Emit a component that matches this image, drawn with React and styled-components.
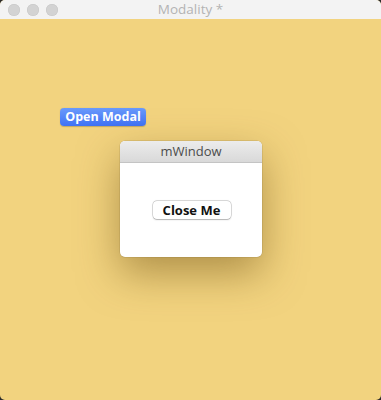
import React from 'react';
import styled, { createGlobalStyle } from 'styled-components';

const GlobalStyle = createGlobalStyle`
  html, body {
    margin: 0;
    padding: 0;
    background: #2b2b2b;
  }
  body {
    font-family: "Liberation Sans", Arial, sans-serif;
  }
`;

const Window = styled.div`
  width: 381px;
  height: 400px;
  border-radius: 5px;
  overflow: hidden;
  display: flex;
  flex-direction: column;
  background: #f2d37f;
`;

const TitleBar = styled.div`
  height: 19px;
  flex: none;
  background: #f3f3f3;
  display: flex;
  align-items: center;
  position: relative;
  padding-left: 8px;
  gap: 7px;
`;

const Light = styled.span`
  width: 12px;
  height: 12px;
  border-radius: 50%;
  background: #d3d3d3;
  box-shadow: inset 0 0 0 0.5px #c6c6c6;
`;

const Title = styled.div`
  position: absolute;
  left: 0;
  right: 0;
  top: 0;
  height: 19px;
  line-height: 19px;
  text-align: center;
  font-size: 13.5px;
  color: #b3b3b3;
  font-family: "Open Sans", "Liberation Sans", sans-serif;
`;

const Content = styled.div`
  flex: 1;
  padding: 89px 0 0 60px;
  display: flex;
  flex-direction: column;
  align-items: flex-start;
`;

const BlueButton = styled.button`
  height: 18px;
  width: 86px;
  padding: 0;
  border: none;
  border-radius: 4px;
  background: linear-gradient(#6a9afb, #3f72f5);
  color: #fff;
  font-family: "Open Sans", "Liberation Sans", sans-serif;
  font-weight: 700;
  font-size: 12.5px;
  line-height: 18px;
  box-shadow: 0 0.5px 1px rgba(0, 0, 0, 0.2);
`;

const Modal = styled.div`
  margin: 15px 0 0 60px;
  width: 142px;
  height: 116px;
  border-radius: 5px;
  overflow: hidden;
  background: #fff;
  display: flex;
  flex-direction: column;
  box-shadow: 0 16px 40px rgba(110, 80, 20, 0.5), 0 0 0 0.5px rgba(0, 0, 0, 0.15);
`;

const ModalBar = styled.div`
  height: 21px;
  flex: none;
  background: linear-gradient(#ececec, #d9d9d9);
  border-bottom: 1px solid #c4c4c4;
  text-align: center;
  line-height: 21px;
  font-size: 13px;
  color: #4c4c4c;
  font-family: "Open Sans", "Liberation Sans", sans-serif;
`;

const ModalBody = styled.div`
  flex: 1;
  display: flex;
  justify-content: center;
  padding-top: 38px;
  padding-left: 1px;
`;

const PlainButton = styled.button`
  height: 18px;
  width: 78px;
  padding: 0;
  border: none;
  border-radius: 4px;
  background: #fff;
  box-shadow: 0 0 0 0.5px rgba(0, 0, 0, 0.25), 0 0.5px 1.5px rgba(0, 0, 0, 0.2);
  color: #111;
  font-family: "Open Sans", "Liberation Sans", sans-serif;
  font-weight: 700;
  font-size: 13px;
  line-height: 18px;
`;

export default function App() {
  return (
    <>
      <GlobalStyle />
      <Window>
        <TitleBar>
          <Light />
          <Light />
          <Light />
          <Title>Modality *</Title>
        </TitleBar>
        <Content>
          <BlueButton>Open Modal</BlueButton>
          <Modal>
            <ModalBar>mWindow</ModalBar>
            <ModalBody>
              <PlainButton>Close Me</PlainButton>
            </ModalBody>
          </Modal>
        </Content>
      </Window>
    </>
  );
}
